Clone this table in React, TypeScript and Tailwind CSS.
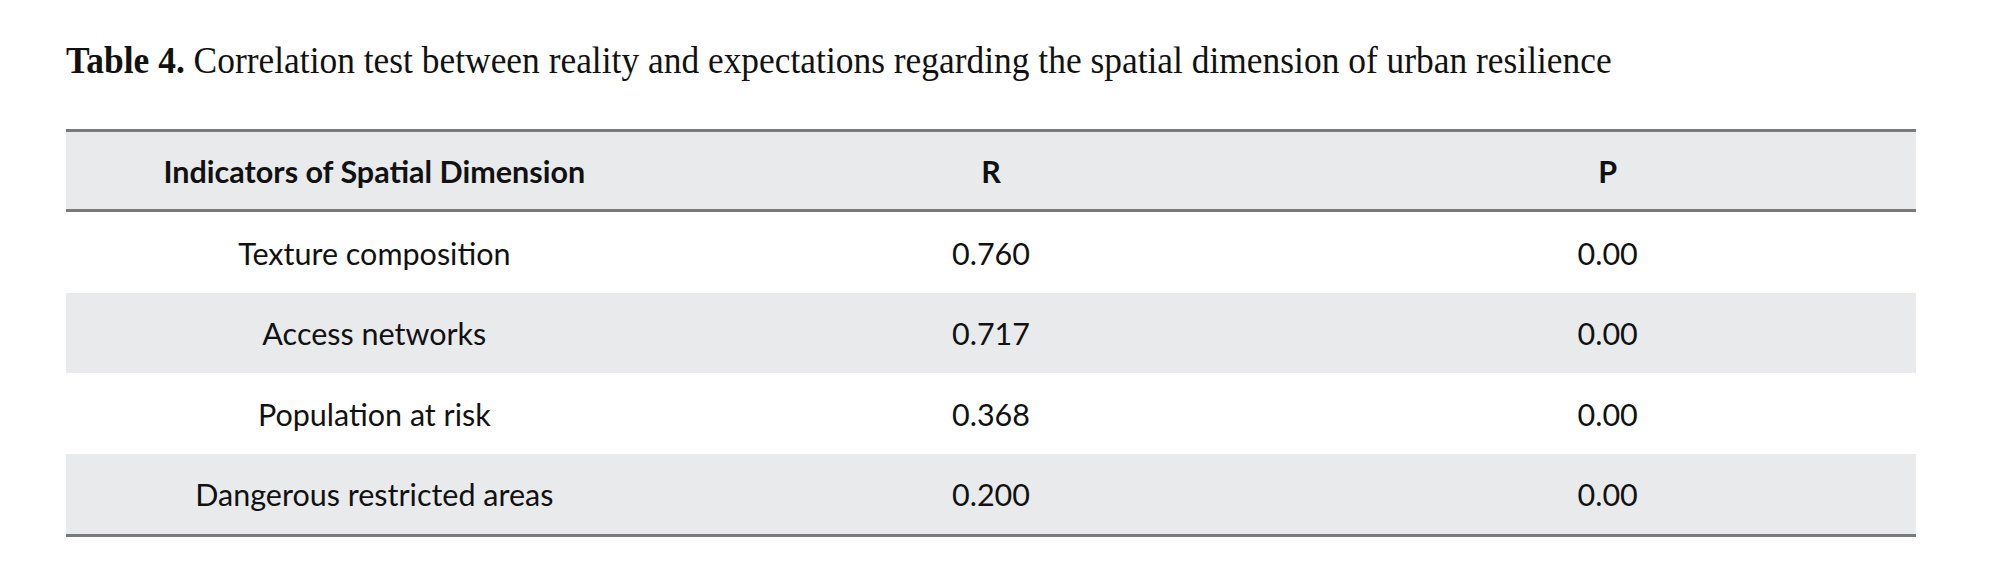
const rows = [
  { name: 'Texture composition', r: '0.760', p: '0.00' },
  { name: 'Access networks', r: '0.717', p: '0.00' },
  { name: 'Population at risk', r: '0.368', p: '0.00' },
  { name: 'Dangerous restricted areas', r: '0.200', p: '0.00' },
];

export default function App() {
  return (
    <div className="w-[2000px] h-[586px] bg-white text-[#111111] pl-[66px] pt-[41px]">
      {/* caption */}
      <p className="font-['Liberation_Serif',serif] text-[38px] leading-[38px] whitespace-nowrap origin-left scale-x-[0.932]">
        <span className="font-bold">Table 4.</span> Correlation test between reality and expectations regarding the
        spatial dimension of urban resilience
      </p>

      {/* table */}
      <div className="mt-[50px] w-[1850px] font-['Lato',sans-serif] text-[30.5px]">
        <div className="grid grid-cols-3 h-[83px] pt-[3px] items-center bg-[#e9eaec] border-y-[3px] border-[#7a7a7a] font-bold">
          <div className="text-center">Indicators of Spatial Dimension</div>
          <div className="text-center">R</div>
          <div className="text-center">P</div>
        </div>
        {rows.map((row, i) => (
          <div
            key={row.name}
            className={`grid grid-cols-3 h-[80.5px] pt-[3px] items-center ${i % 2 === 1 ? 'bg-[#e9eaec]' : 'bg-white'}`}
          >
            <div className="text-center">{row.name}</div>
            <div className="text-center">{row.r}</div>
            <div className="text-center">{row.p}</div>
          </div>
        ))}
        <div className="h-[3px] bg-[#7a7a7a]" />
      </div>
    </div>
  );
}
